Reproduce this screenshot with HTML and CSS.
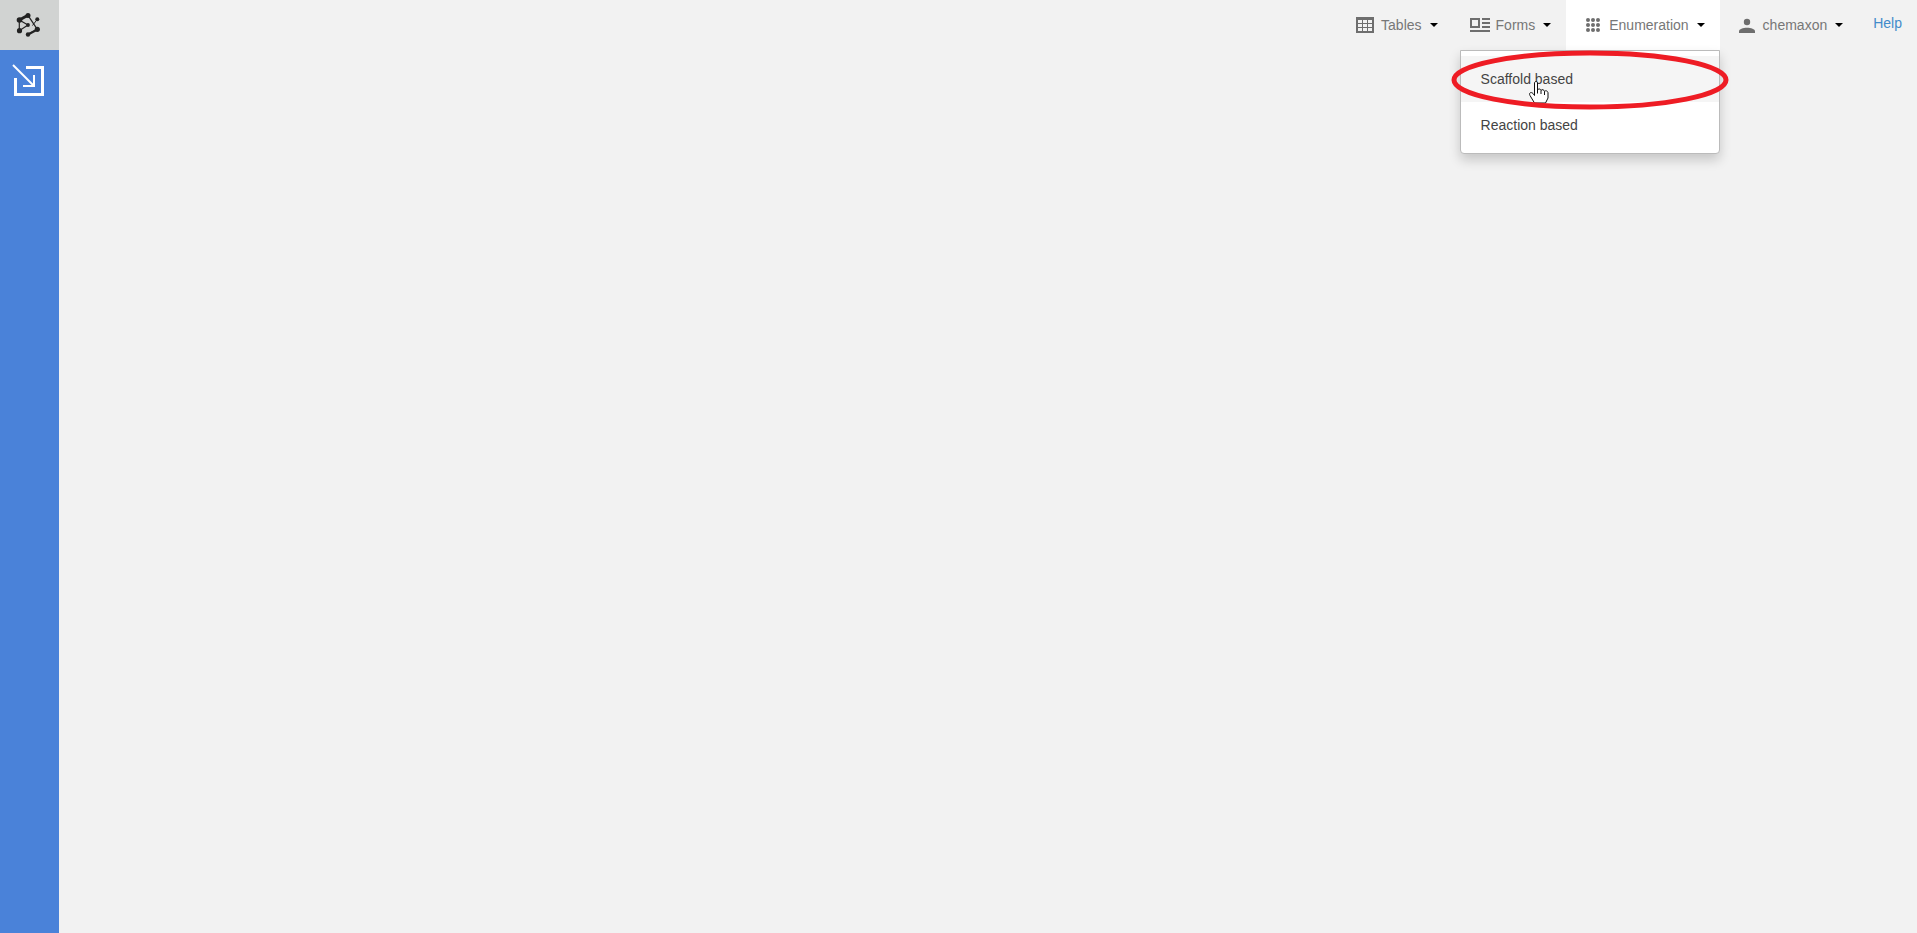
FILE: index.html
```html
<!DOCTYPE html>
<html lang="en">
<head>
    <meta charset="UTF-8">
    <meta name="viewport" content="width=device-width, initial-scale=1.0">
    <title>Enumeration</title>
    <link rel="stylesheet" href="styles.css">
</head>
<body>
    <aside class="sidebar">
        <a class="logo" href="#" aria-label="Home">
            <svg width="27" height="26" viewBox="0 0 27 26">
                <g stroke="#222" fill="none">
                    <path d="M3.300 8V18.700L12 13L3.300 8" stroke-width="1.200"/>
                    <path d="M12 3.300L21.300 17.300L12 22.300" stroke-width="1.200"/>
                    <path d="M21.300 7.300L16.500 13.500" stroke-width="1"/>
                    <path d="M3.300 8L12 3.300" stroke-width="3"/>
                    <path d="M20.500 18L12 22.500" stroke-width="2"/>
                </g>
                <g fill="#222">
                    <circle cx="12" cy="3.500" r="2.500"/>
                    <circle cx="3.500" cy="8" r="2.800"/>
                    <circle cx="3.500" cy="18.700" r="2.600"/>
                    <circle cx="12" cy="22.500" r="2.200"/>
                    <circle cx="21.300" cy="17.300" r="2.600"/>
                    <circle cx="21.300" cy="7.300" r="2"/>
                    <circle cx="12" cy="13" r="1.900"/>
                </g>
            </svg>
        </a>
        <button class="sidebar-button" type="button" aria-label="Open panel">
            <svg width="35" height="32" viewBox="0 0 35 32" fill="none" stroke="#fff">
                <path d="M14 3.500H30.500V30.500H3.500V14" stroke-width="3"/>
                <path d="M1 1L21 21" stroke-width="2"/>
                <path d="M11 22H22V11" stroke-width="2"/>
            </svg>
        </button>
    </aside>

    <main class="content">
        <nav class="navbar">
            <button class="nav-item" type="button">
                <svg class="icon" viewBox="0 0 24 24">
                    <path fill="#6e6e6e" fill-rule="evenodd" d="M3 4H21V20H3ZM5 7V10H9V7ZM10 7V10H14V7ZM15 7V10H19V7ZM5 11V14H9V11ZM10 11V14H14V11ZM15 11V14H19V11ZM5 15V18H9V15ZM10 15V18H14V15ZM15 15V18H19V15Z"/>
                </svg>
                <span>Tables</span>
                <i class="caret"></i>
            </button>
            <button class="nav-item" type="button">
                <svg class="icon" viewBox="0 0 24 24">
                    <path fill="#6e6e6e" fill-rule="evenodd" d="M2 5H12V15H2ZM4 7V13H10V7ZM14 5H22V7H14ZM14 9H22V11H14ZM14 13H22V15H14ZM2 17H22V19H2Z"/>
                </svg>
                <span>Forms</span>
                <i class="caret"></i>
            </button>
            <div class="dropdown">
                <button class="nav-item active" type="button" aria-expanded="true">
                    <svg class="icon" viewBox="0 0 24 24" fill="#6e6e6e">
                        <circle cx="7" cy="7" r="2"/><circle cx="12" cy="7" r="2"/><circle cx="17" cy="7" r="2"/>
                        <circle cx="7" cy="12" r="2"/><circle cx="12" cy="12" r="2"/><circle cx="17" cy="12" r="2"/>
                        <circle cx="7" cy="17" r="2"/><circle cx="12" cy="17" r="2"/><circle cx="17" cy="17" r="2"/>
                    </svg>
                    <span>Enumeration</span>
                    <i class="caret"></i>
                </button>
                <div class="dropdown-menu">
                    <a class="menu-item hovered" href="#">Scaffold based</a>
                    <a class="menu-item" href="#">Reaction based</a>
                    <!-- pointer and highlight over the first item -->
                    <svg class="highlight" width="278" height="60" viewBox="0 0 278 60">
                        <g stroke="#111" transform="translate(-1 -1)">
                            <path fill="#fff" d="M84.500 54L80 46.500C78.500 44 81 42.500 83 44.500L84.500 46.500V34C84.500 32 87.500 32 87.500 34V41C88 39.500 90.500 39.500 91 41.500C92 40 94 40.500 94.500 42.500C95.500 41 98 42 98 44V49L95.500 54Z"/>
                            <path d="M87.500 41V44.500M91 41.500V45M94.500 42.500V46"/>
                        </g>
                        <ellipse cx="139" cy="30" rx="136" ry="27" fill="none" stroke="#ee1c24" stroke-width="5"/>
                    </svg>
                </div>
            </div>
            <button class="nav-item" type="button">
                <svg class="icon" viewBox="0 0 24 24" fill="#6e6e6e">
                    <circle cx="12" cy="9" r="3.200"/>
                    <path d="M4 20V18.500C4 13.500 20 13.500 20 18.500V20Z"/>
                </svg>
                <span>chemaxon</span>
                <i class="caret"></i>
            </button>
            <a class="help-link" href="#">Help</a>
        </nav>
    </main>
</body>
</html>
```
FILE: styles.css
```css
* {
    box-sizing: border-box;
}

body {
    margin: 0;
    min-height: 100vh;
    display: flex;
    background: #f2f2f2;
    font-family: "Liberation Sans", Arial, sans-serif;
    font-size: 14px;
    line-height: 20px;
}

button {
    margin: 0;
    border: none;
    background: none;
    font: inherit;
    cursor: pointer;
}

a {
    text-decoration: none;
}

.sidebar {
    display: flex;
    flex-direction: column;
    width: 59px;
    flex-shrink: 0;
    background: #4a82d9;
}

.logo {
    display: flex;
    align-items: center;
    justify-content: center;
    height: 50px;
    background: #d1d3d2;
}

.sidebar-button {
    display: flex;
    justify-content: center;
    padding: 14px 0;
}

.content {
    flex: 1;
}

.navbar {
    display: flex;
    justify-content: flex-end;
    height: 50px;
}

.nav-item {
    display: flex;
    align-items: center;
    height: 50px;
    padding: 0 15px 1px;
    color: #777;
}

.nav-item.active {
    background: #fff;
}

.icon {
    width: 24px;
    height: 24px;
    margin-right: 4px;
}

.caret {
    margin-left: 8px;
    border-top: 4px solid #000;
    border-left: 4px solid transparent;
    border-right: 4px solid transparent;
}

.help-link {
    padding: 13px 15px;
    color: #428bca;
}

.dropdown {
    position: relative;
}

.dropdown-menu {
    position: absolute;
    top: 100%;
    right: 0;
    width: 260px;
    padding: 5px 0;
    background: #fff;
    border: 1px solid #bbb;
    border-radius: 0 0 4px 4px;
    box-shadow: 0 6px 12px rgba(0, 0, 0, 0.18);
}

.menu-item {
    display: block;
    padding: 13px 20px;
    color: #444;
}

.menu-item.hovered {
    background: #f5f5f5;
}

.highlight {
    position: absolute;
    top: -1px;
    left: -10px;
    pointer-events: none;
}
```
